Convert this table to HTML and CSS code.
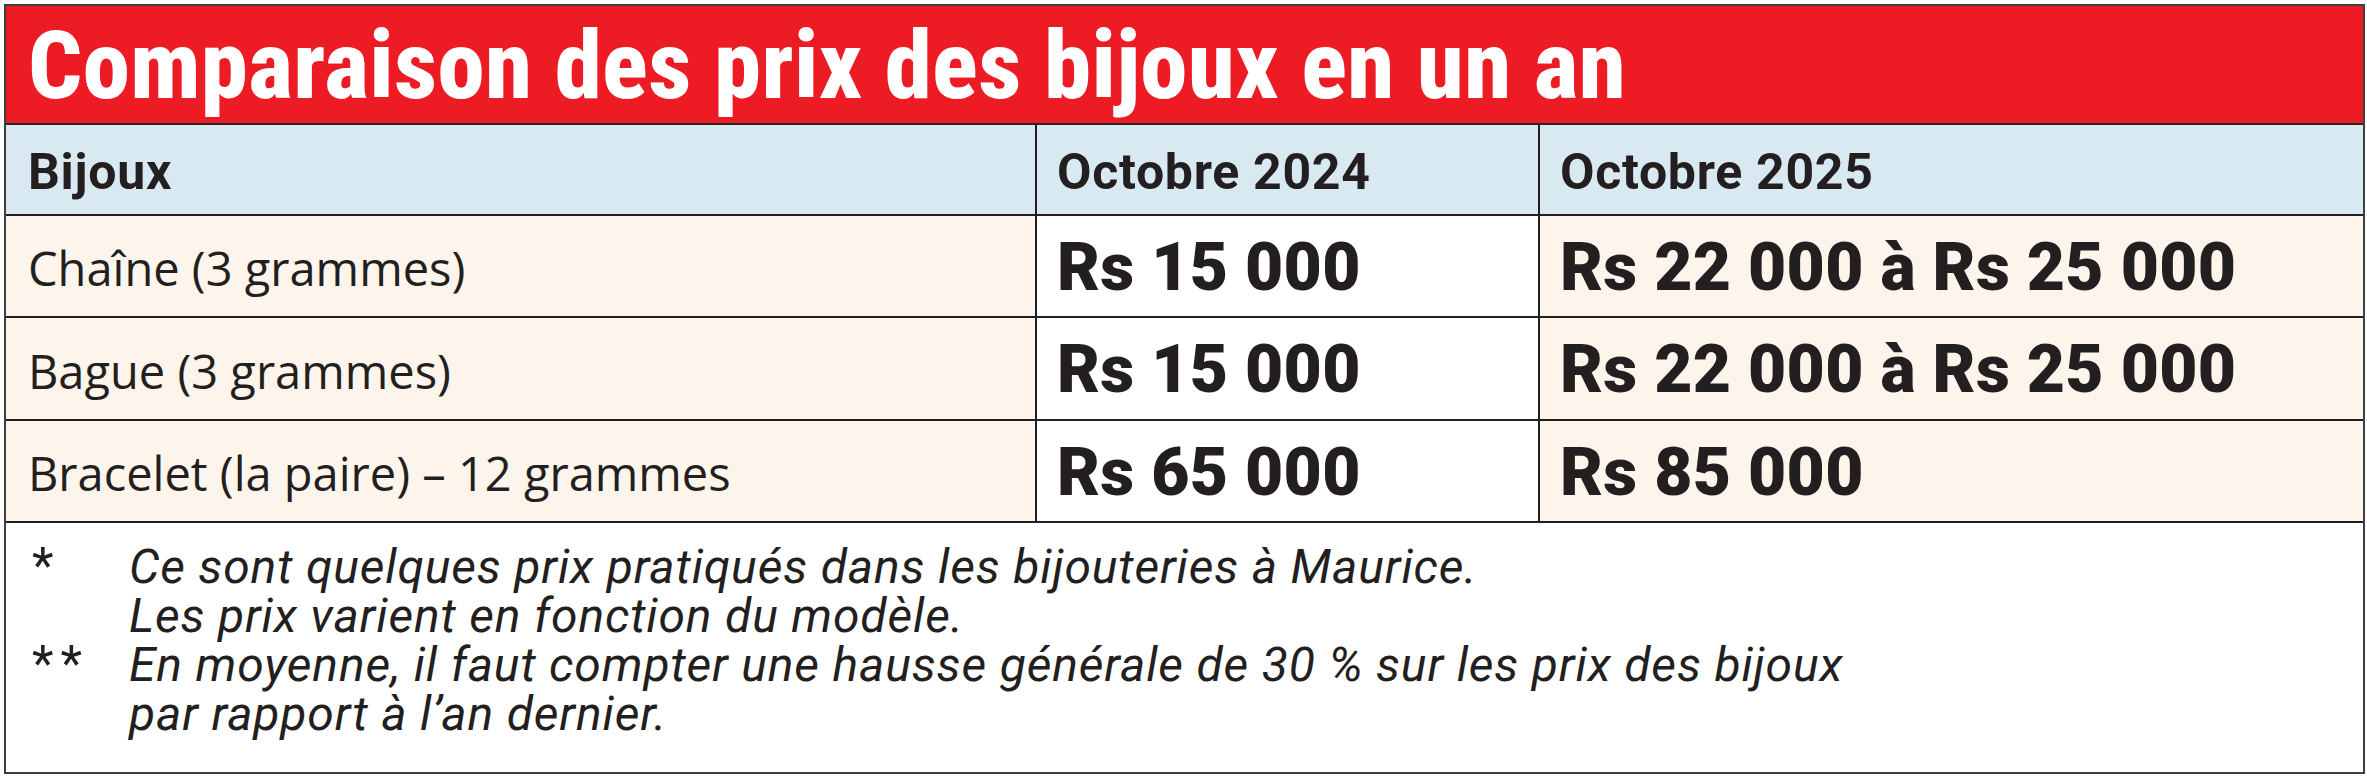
FILE: index.html
```html
<!DOCTYPE html>
<html lang="fr">
<head>
<meta charset="utf-8">
<title>Comparaison des prix des bijoux en un an</title>
<link rel="stylesheet" href="styles.css">
</head>
<body>
<div class="card">
  <h1 class="title">Comparaison des prix des bijoux en un an</h1>
  <div class="table">
    <div class="cell head">Bijoux</div>
    <div class="cell head">Octobre 2024</div>
    <div class="cell head last">Octobre 2025</div>

    <div class="cell item">Chaîne (3 grammes)</div>
    <div class="cell price white">Rs 15 000</div>
    <div class="cell price last">Rs 22 000 à Rs 25 000</div>

    <div class="cell item">Bague (3 grammes)</div>
    <div class="cell price white">Rs 15 000</div>
    <div class="cell price last">Rs 22 000 à Rs 25 000</div>

    <div class="cell item">Bracelet (la paire) – 12 grammes</div>
    <div class="cell price white">Rs 65 000</div>
    <div class="cell price last">Rs 85 000</div>
  </div>
  <div class="notes">
    <div class="note">
      <span class="mark">*</span>
      <div class="note-text">
        <div class="line">Ce sont quelques prix pratiqués dans les bijouteries à Maurice.</div>
        <div class="line">Les prix varient en fonction du modèle.</div>
      </div>
    </div>
    <div class="note">
      <span class="mark">**</span>
      <div class="note-text">
        <div class="line">En moyenne, il faut compter une hausse générale de 30 % sur les prix des bijoux</div>
        <div class="line">par rapport à l’an dernier.</div>
      </div>
    </div>
  </div>
</div>
</body>
</html>
```
FILE: styles.css
```css
html, body {
  margin: 0;
  padding: 0;
  background: #ffffff;
}

body {
  font-family: "Roboto", "Liberation Sans", sans-serif;
  color: #231f20;
}

.card {
  box-sizing: border-box;
  width: 2361px;
  height: 770px;
  margin: 4px 0 0 4px;
  border: 2px solid #3f3f3f;
  display: flex;
  flex-direction: column;
  background: #ffffff;
}

.title {
  box-sizing: border-box;
  margin: 0;
  height: 119px;
  padding: 0 0 0 22px;
  background: #ed1c24;
  border-bottom: 2px solid #2b2324;
  color: #ffffff;
  font-family: "Roboto Condensed", "Roboto", sans-serif;
  font-weight: 800;
  font-size: 95px;
  letter-spacing: 0.4px;
  line-height: 119px;
  white-space: nowrap;
}

.table {
  display: grid;
  grid-template-columns: 1031px 503px 1fr;
  grid-template-rows: 91px 102px 103px 102px;
}

.cell {
  box-sizing: border-box;
  display: flex;
  align-items: center;
  border-right: 2px solid #231f20;
  border-bottom: 2px solid #231f20;
  background: #fdf5ec;
  white-space: nowrap;
  padding-left: 20px;
}

.cell.last {
  border-right: none;
}

.head {
  background: #d9e9f1;
  font-weight: 700;
  font-size: 50px;
  letter-spacing: 0.7px;
  padding-top: 4px;
}

.head:first-child {
  padding-left: 22px;
}

.item {
  font-family: "Open Sans", "Roboto", sans-serif;
  font-size: 47px;
  font-weight: 400;
  padding-left: 22px;
  padding-top: 4px;
}

.price {
  font-weight: 900;
  font-size: 66px;
  letter-spacing: 0.3px;
  padding-top: 2px;
}

.price.white {
  background: #ffffff;
}

.notes {
  flex: 1;
  padding: 19px 0 0 26px;
  font-style: italic;
  font-size: 48px;
  letter-spacing: 0.85px;
}

.note {
  display: flex;
}

.mark {
  width: 97px;
  flex: none;
  font-style: normal;
  font-size: 50px;
  line-height: 49px;
  letter-spacing: 7px;
}

.line {
  height: 49px;
  line-height: 49px;
  white-space: nowrap;
}
```
